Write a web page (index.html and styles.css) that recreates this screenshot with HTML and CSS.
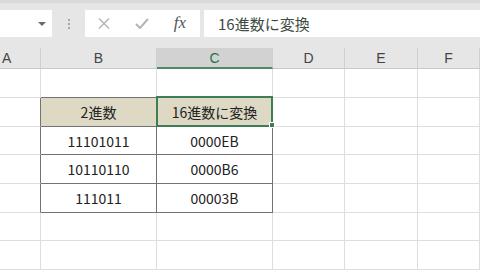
FILE: index.html
```html
<!DOCTYPE html>
<html>
<head>
    <title>16進数に変換</title>
    <link rel="stylesheet" href="styles.css">
</head>
<body>
    <!-- Formulebalk -->
    <div class="toolbar">
        <div class="namebox"><span class="arrow"></span></div>
        <div class="grip"><span></span><span></span><span></span></div>
        <div class="fx-buttons">
            <span class="fx-slot">
                <svg width="12" height="11" viewBox="0 0 12 11"><path d="M1 0.5L11 10.5M11 0.5L1 10.5" stroke="#b4b4b4" stroke-width="1.4" fill="none"/></svg>
            </span>
            <span class="fx-slot">
                <svg width="14" height="11" viewBox="0 0 14 11"><path d="M1 6L5 10L13 1" stroke="#b4b4b4" stroke-width="2" fill="none"/></svg>
            </span>
            <span class="fx-slot fx">fx</span>
        </div>
        <div class="formula">16進数に変換</div>
    </div>

    <!-- Werkblad -->
    <div class="sheet">
        <div class="cell colhead col-a">A</div>
        <div class="cell colhead">B</div>
        <div class="cell colhead active">C</div>
        <div class="cell colhead">D</div>
        <div class="cell colhead">E</div>
        <div class="cell colhead">F</div>

        <div class="cell"></div>
        <div class="cell edge-b"></div>
        <div class="cell edge-b"></div>
        <div class="cell"></div>
        <div class="cell"></div>
        <div class="cell"></div>

        <div class="cell edge-r"></div>
        <div class="cell tbl thead">2進数</div>
        <div class="cell tbl thead sel">16進数に変換<span class="handle"></span></div>
        <div class="cell"></div>
        <div class="cell"></div>
        <div class="cell"></div>

        <div class="cell edge-r"></div>
        <div class="cell tbl">11101011</div>
        <div class="cell tbl">0000EB</div>
        <div class="cell"></div>
        <div class="cell"></div>
        <div class="cell"></div>

        <div class="cell edge-r"></div>
        <div class="cell tbl">10110110</div>
        <div class="cell tbl">0000B6</div>
        <div class="cell"></div>
        <div class="cell"></div>
        <div class="cell"></div>

        <div class="cell edge-r"></div>
        <div class="cell tbl">111011</div>
        <div class="cell tbl">00003B</div>
        <div class="cell"></div>
        <div class="cell"></div>
        <div class="cell"></div>

        <div class="cell"></div>
        <div class="cell"></div>
        <div class="cell"></div>
        <div class="cell"></div>
        <div class="cell"></div>
        <div class="cell"></div>

        <div class="cell"></div>
        <div class="cell"></div>
        <div class="cell"></div>
        <div class="cell"></div>
        <div class="cell"></div>
        <div class="cell"></div>
    </div>
</body>
</html>
```

FILE: styles.css
```css
body {
    margin: 0;
    padding: 0;
    background-color: #ffffff;
    font-family: "Noto Sans CJK JP", "Liberation Sans", sans-serif;
    color: #222222;
    overflow: hidden;
    width: 480px;
    height: 270px;
}

/* Formulebalk */
.toolbar {
    display: flex;
    height: 27px;
    padding: 7px 0 11px 0;
    border-top: 3px solid #d9d9d9;
    background-color: #e6e6e6;
}

.namebox {
    width: 52px;
    background-color: #ffffff;
    display: flex;
    align-items: center;
    justify-content: flex-end;
}

.arrow {
    width: 0;
    height: 0;
    border-left: 4px solid transparent;
    border-right: 4px solid transparent;
    border-top: 4px solid #6a6a6a;
    margin-right: 6px;
}

.grip {
    width: 33px;
    display: flex;
    flex-direction: column;
    align-items: center;
    justify-content: center;
    gap: 2px;
}

.grip span {
    width: 2px;
    height: 2px;
    background-color: #a8a8a8;
}

.fx-buttons {
    width: 115px;
    background-color: #ffffff;
    display: flex;
}

.fx-slot {
    width: 38px;
    display: flex;
    align-items: center;
    justify-content: center;
}

.fx {
    font-family: "Liberation Serif", serif;
    font-style: italic;
    font-size: 17px;
    color: #555555;
    padding-bottom: 2px;
}

.formula {
    flex: 1;
    margin-left: 4px;
    background-color: #ffffff;
    padding-left: 14px;
    font-size: 15px;
    line-height: 27px;
    color: #3d4d44;
}

/* Werkblad */
.sheet {
    display: grid;
    grid-template-columns: 41px 116px 116px 72px 73px 1fr;
    grid-template-rows: 21px 29px 29px 28px 29px 29px 28px 29px;
}

.cell {
    border-right: 1px solid #dedede;
    border-bottom: 1px solid #dedede;
    display: flex;
    align-items: center;
    justify-content: center;
    font-size: 14px;
    position: relative;
}

.colhead {
    background-color: #e6e6e6;
    border-right-color: #cfcfcf;
    border-bottom-color: #c8c8c8;
    color: #444444;
    font-family: "Liberation Sans", sans-serif;
    font-size: 14px;
}

.col-a {
    justify-content: flex-start;
    padding-left: 2px;
}

.colhead.active {
    background-color: #d2d2d2;
    color: #217346;
    border-bottom: 2px solid #4e8a66;
}

.edge-r {
    border-right-color: #737373;
}

.edge-b {
    border-bottom-color: #737373;
}

.tbl {
    border-right-color: #737373;
    border-bottom-color: #737373;
}

.thead {
    background-color: #ddd9c4;
}

/* Geselecteerde cel */
.sel::after {
    content: "";
    position: absolute;
    top: -2px;
    left: -1px;
    right: -1px;
    bottom: -1px;
    border: 2px solid #3f7d57;
}

.handle {
    position: absolute;
    right: -3px;
    bottom: -2px;
    width: 4px;
    height: 4px;
    background-color: #3f7d57;
    border: 1px solid #ffffff;
    z-index: 1;
}
```
